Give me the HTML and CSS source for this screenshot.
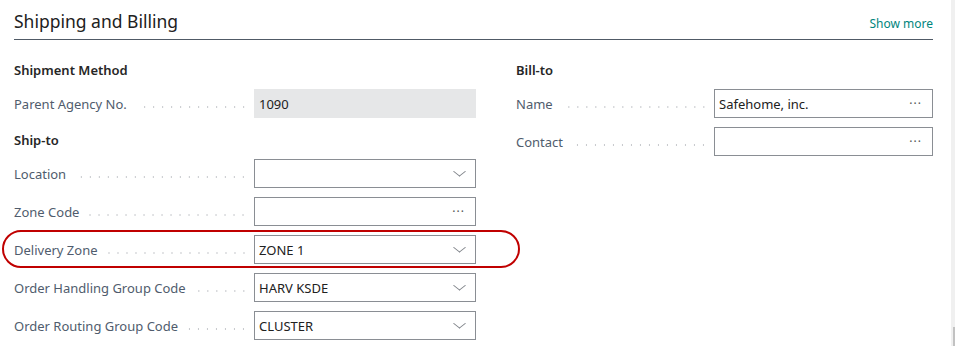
FILE: index.html
```html
<!DOCTYPE html>
<html lang="en">
<head>
    <meta charset="UTF-8">
    <title>Shipping and Billing</title>
    <link rel="stylesheet" href="styles.css">
</head>
<body>
    <main class="page">
        <div class="fasttab-header">
            <h2>Shipping and Billing</h2>
            <a href="#" class="show-more">Show more</a>
        </div>

        <div class="fasttab-body">
            <div class="column column-left">
                <div class="group-caption caption-first">Shipment Method</div>
                <div class="field-row">
                    <span class="field-label">Parent Agency No.</span>
                    <div class="field field-readonly">1090</div>
                </div>

                <div class="group-caption">Ship-to</div>
                <div class="field-row">
                    <span class="field-label">Location</span>
                    <div class="field"><span class="value"></span><span class="chevron"></span></div>
                </div>
                <div class="field-row">
                    <span class="field-label">Zone Code</span>
                    <div class="field"><span class="value"></span><span class="ellipsis">&middot;&middot;&middot;</span></div>
                </div>
                <div class="field-row highlighted">
                    <span class="field-label">Delivery Zone</span>
                    <div class="field"><span class="value">ZONE 1</span><span class="chevron"></span></div>
                </div>
                <div class="field-row">
                    <span class="field-label">Order Handling Group Code</span>
                    <div class="field"><span class="value">HARV KSDE</span><span class="chevron"></span></div>
                </div>
                <div class="field-row">
                    <span class="field-label">Order Routing Group Code</span>
                    <div class="field"><span class="value">CLUSTER</span><span class="chevron"></span></div>
                </div>
            </div>

            <div class="column column-right">
                <div class="group-caption caption-first">Bill-to</div>
                <div class="field-row">
                    <span class="field-label">Name</span>
                    <div class="field"><span class="value">Safehome, inc.</span><span class="ellipsis">&middot;&middot;&middot;</span></div>
                </div>
                <div class="field-row">
                    <span class="field-label">Contact</span>
                    <div class="field"><span class="value"></span><span class="ellipsis">&middot;&middot;&middot;</span></div>
                </div>
            </div>
        </div>
    </main>

    <aside class="scrollbar">
        <div class="scroll-thumb"></div>
    </aside>
</body>
</html>
```

FILE: styles.css
```css
/* Base */
:root {
    --text-dark: #212121;
    --text-label: #505c6d;
    --border-field: #8a8e94;
    --readonly-bg: #e6e7e8;
    --teal: #00857d;
    --highlight: #c00000;
    --leader: #c6c8cc;
}

* {
    margin: 0;
    padding: 0;
    box-sizing: border-box;
}

body {
    font-family: 'Noto Sans', 'Open Sans', sans-serif;
    font-size: 13px;
    color: var(--text-dark);
    background: #FFFFFF;
    display: flex;
    height: 346px;
    overflow: hidden;
}

/* Page */
.page {
    flex: 1;
    padding: 8px 18px 0 14px;
}

.fasttab-header {
    display: flex;
    justify-content: space-between;
    align-items: flex-end;
    border-bottom: 1px solid #505a66;
    padding-bottom: 5px;
}

.fasttab-header h2 {
    font-size: 17.5px;
    font-weight: 400;
    line-height: 26px;
    color: var(--text-dark);
}

.show-more {
    font-size: 12px;
    color: var(--teal);
    text-decoration: none;
    line-height: 20px;
}

/* Columns */
.fasttab-body {
    display: grid;
    grid-template-columns: 462px 417px;
    column-gap: 40px;
}

.group-caption {
    font-weight: 600;
    line-height: 20px;
    margin: 12px 0 9px;
    color: #262626;
}

.group-caption.caption-first {
    margin-top: 20px;
}

.field-row {
    display: flex;
    align-items: center;
    height: 29px;
    margin-bottom: 9px;
    position: relative;
}

.field-label {
    flex: 1;
    display: flex;
    align-items: center;
    color: var(--text-label);
    white-space: nowrap;
    margin-right: 6px;
}

.field-label::after {
    content: "";
    flex: 1;
    height: 2px;
    margin: 6px 0 0 10px;
    background-image: radial-gradient(circle, var(--leader) 0.7px, transparent 1px);
    background-size: 9px 2px;
    background-position: right center;
}

.field {
    width: 222px;
    height: 29px;
    border: 1px solid var(--border-field);
    display: flex;
    align-items: center;
    padding: 0 4px;
}

.column-right .field {
    width: 219px;
}

.field-readonly {
    border: none;
    background: var(--readonly-bg);
    padding: 0 5px;
}

.value {
    flex: 1;
}

.chevron {
    width: 9px;
    height: 9px;
    border-right: 1px solid #7a7e84;
    border-bottom: 1px solid #7a7e84;
    transform: scaleY(0.8) rotate(45deg);
    margin: 0 7px 5px 0;
}

.ellipsis {
    color: #555;
    font-size: 12px;
    letter-spacing: 1px;
    margin-right: 6px;
}

/* Highlight ring drawn over the Delivery Zone row */
.highlighted::before {
    content: "";
    position: absolute;
    top: -5px;
    bottom: -4px;
    left: -12px;
    right: -44px;
    border: 2px solid var(--highlight);
    border-radius: 19px;
    pointer-events: none;
}

/* Scrollbar */
.scrollbar {
    width: 4px;
    background: #f0f0f0;
    display: flex;
    flex-direction: column;
    justify-content: flex-end;
}

.scroll-thumb {
    height: 19px;
    width: 2px;
    margin-left: 2px;
    background: #c2c2c2;
}
```
